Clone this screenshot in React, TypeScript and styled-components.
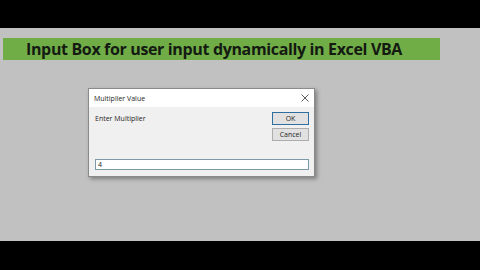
import styled, { createGlobalStyle } from "styled-components";

const GlobalStyle = createGlobalStyle`
    html, body {
        margin: 0;
        padding: 0;
        background: #000;
    }
    #root {
        width: 480px;
        height: 270px;
    }
`;

const Screen = styled.div`
    width: 480px;
    height: 270px;
    display: flex;
    flex-direction: column;
    background: #000;
    overflow: hidden;
`;

const Bar = styled.div<{ h: number }>`
    height: ${(p) => p.h}px;
    flex-shrink: 0;
    background: #000;
`;

const Stage = styled.main`
    flex: 1;
    background: #c1c1c1;
    padding: 10px 0 0 3px;
    display: flex;
    flex-direction: column;
    align-items: flex-start;
`;

const Banner = styled.h1`
    margin: 0;
    width: 437px;
    height: 22px;
    background: #70ad47;
    color: #141a12;
    font-family: "Open Sans", "Noto Sans", sans-serif;
    font-weight: 700;
    font-size: 16px;
    line-height: 22px;
    padding-left: 23px;
    box-sizing: border-box;
    white-space: nowrap;
    letter-spacing: -0.35px;
`;

const Dialog = styled.div`
    margin: 28px 0 0 85px;
    width: 227px;
    height: 89px;
    background: #f0f0f0;
    border: 1px solid #8a8a8a;
    box-sizing: border-box;
    box-shadow: 2px 2px 4px rgba(0, 0, 0, 0.35);
    display: flex;
    flex-direction: column;
    font-family: "Open Sans", "Noto Sans", sans-serif;
    font-size: 7px;
    color: #1e1e1e;
`;

const TitleBar = styled.div`
    height: 18px;
    background: #fff;
    display: flex;
    align-items: center;
    justify-content: space-between;
    padding: 0 5px 0 5px;
`;

const Close = styled.svg`
    width: 8px;
    height: 8px;
`;

const Body = styled.div`
    flex: 1;
    display: grid;
    grid-template-columns: 1fr 37px;
    grid-template-rows: auto 1fr auto;
    padding: 5px 5px 6px 6px;
    column-gap: 6px;
`;

const Prompt = styled.div`
    padding-top: 2px;
`;

const Buttons = styled.div`
    display: flex;
    flex-direction: column;
    gap: 3px;
    grid-row: 1 / 3;
    grid-column: 2;
`;

const Button = styled.button<{ primary?: boolean }>`
    width: 37px;
    height: 13px;
    padding: 0;
    font: inherit;
    color: #1e1e1e;
    background: #e1e1e1;
    border: 1px solid ${(p) => (p.primary ? "#2f6f9f" : "#adadad")};
    box-sizing: border-box;
`;

const Input = styled.div`
    grid-column: 1 / 3;
    grid-row: 3;
    height: 11px;
    background: #fff;
    border: 1px solid #7a9aa8;
    box-sizing: border-box;
    padding-left: 2px;
    line-height: 9px;
`;

function App() {
    return (
        <>
            <GlobalStyle />
            <Screen>
                <Bar h={28} />
                <Stage>
                    <Banner>Input Box for user input dynamically in Excel VBA</Banner>
                    <Dialog>
                        <TitleBar>
                            <span>Multiplier Value</span>
                            <Close viewBox="0 0 8 8">
                                <path d="M0.5 0.5 L7.5 7.5 M7.5 0.5 L0.5 7.5" stroke="#333" strokeWidth="0.8" />
                            </Close>
                        </TitleBar>
                        <Body>
                            <Prompt>Enter Multiplier</Prompt>
                            <Buttons>
                                <Button primary>OK</Button>
                                <Button>Cancel</Button>
                            </Buttons>
                            <Input>4</Input>
                        </Body>
                    </Dialog>
                </Stage>
                <Bar h={29} />
            </Screen>
        </>
    );
}

export default App;
